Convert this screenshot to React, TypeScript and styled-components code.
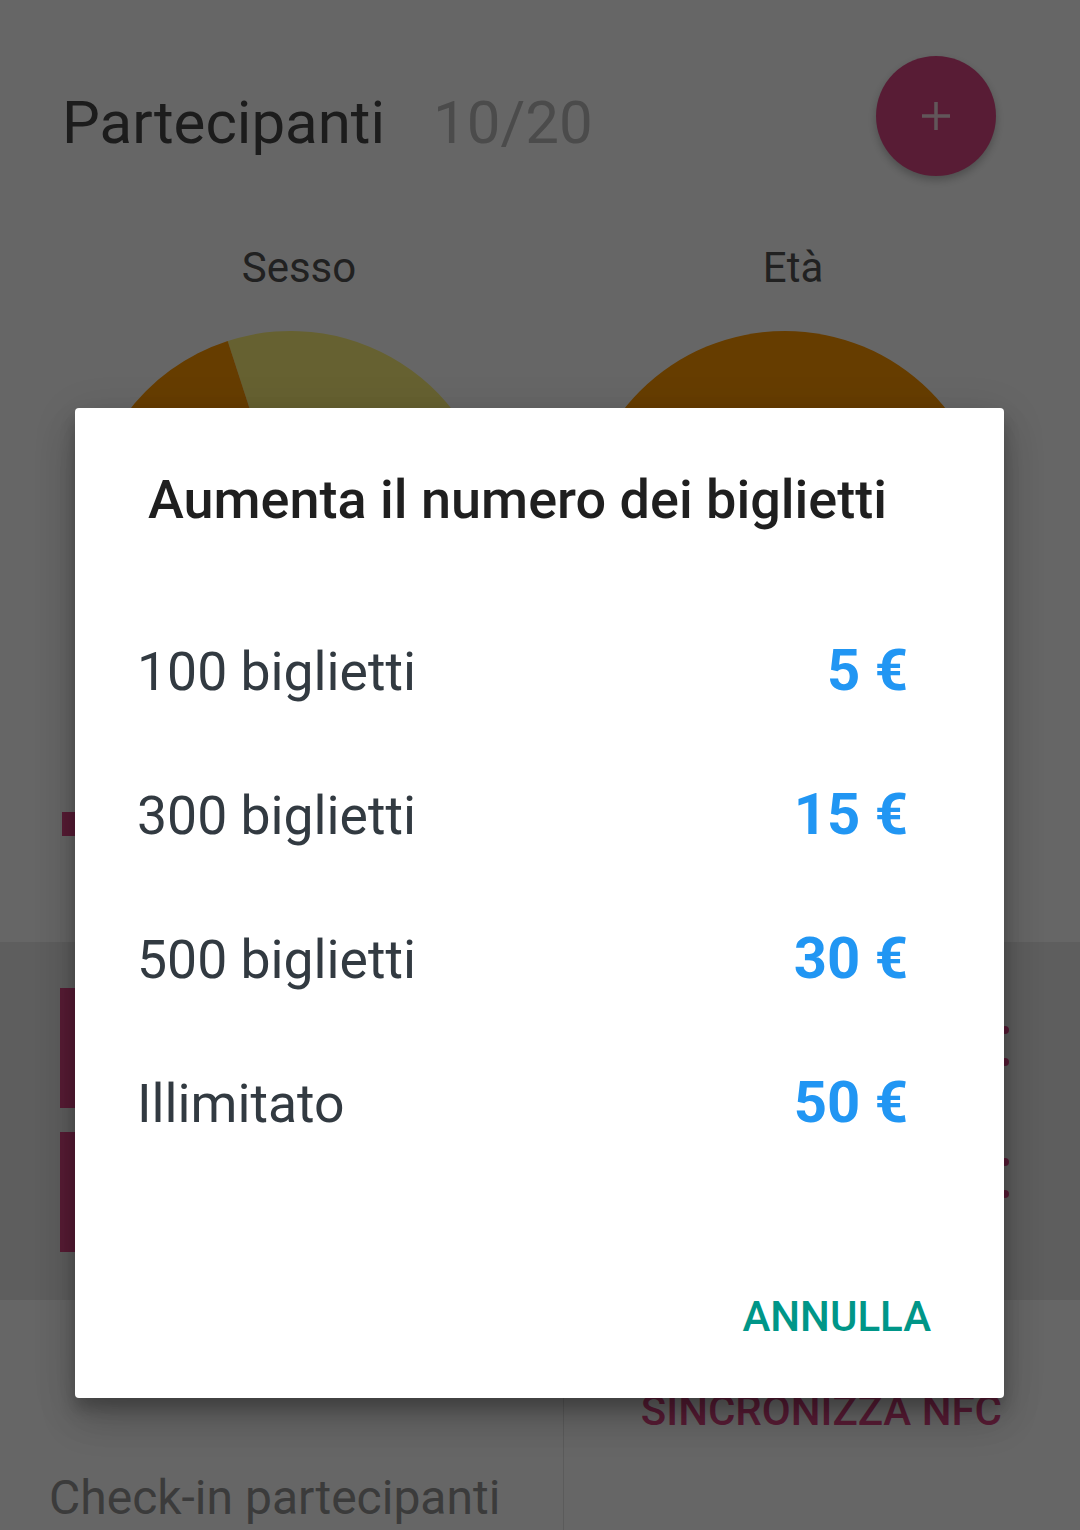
import React from 'react';
import styled, { createGlobalStyle } from 'styled-components';

const GlobalStyle = createGlobalStyle`
  html, body {
    margin: 0;
    padding: 0;
  }
  body {
    font-family: Roboto, 'Liberation Sans', sans-serif;
    background: #fff;
  }
  * {
    box-sizing: border-box;
  }
`;

const CRIMSON = '#dc4886';

const options = [
  { label: '100 biglietti', price: '5 €' },
  { label: '300 biglietti', price: '15 €' },
  { label: '500 biglietti', price: '30 €' },
  { label: 'Illimitato', price: '50 €' },
];

const App = () => {
  return (
    <Page>
      <GlobalStyle />

      <Header>
        <Title>Partecipanti</Title>
        <Count>10/20</Count>
        <Fab aria-label="aggiungi">
          <svg width="36" height="36" viewBox="0 0 36 36">
            <path d="M18 4v28M4 18h28" stroke="#f2d6e0" strokeWidth="3.5" />
          </svg>
        </Fab>
      </Header>

      <Stats>
        <StatColumn>
          <StatLabel>Sesso</StatLabel>
          <Pie width="410" height="410" viewBox="0 0 410 410">
            <path d="M205 205 L141.7 10 A205 205 0 1 1 141.7 400 Z" fill="#fff37a" />
            <path d="M205 205 L141.7 400 A205 205 0 0 1 141.7 10 Z" fill="#ff9800" />
          </Pie>
        </StatColumn>
        <StatColumn>
          <StatLabel>Età</StatLabel>
          <Pie width="410" height="410" viewBox="0 0 410 410">
            <circle cx="205" cy="205" r="205" fill="#ff9800" />
          </Pie>
        </StatColumn>
      </Stats>

      <Legend>
        <LegendSwatch />
      </Legend>

      <Band>
        <Card>
          <CardBar />
          <Dots $offset={42}>
            <Dot />
            <Dot />
          </Dots>
        </Card>
        <Card>
          <CardBar />
          <Dots $offset={30}>
            <Dot />
            <Dot />
          </Dots>
        </Card>
      </Band>

      <Bottom>
        <BottomCell>
          <CheckIn>Check-in partecipanti</CheckIn>
        </BottomCell>
        <BottomCell $divider>
          <SyncButton>SINCRONIZZA NFC</SyncButton>
        </BottomCell>
      </Bottom>

      <Scrim>
        <Dialog role="dialog">
          <DialogTitle>Aumenta il numero dei biglietti</DialogTitle>
          <OptionList>
            {options.map((o) => (
              <OptionRow key={o.label}>
                <OptionLabel>{o.label}</OptionLabel>
                <OptionPrice>{o.price}</OptionPrice>
              </OptionRow>
            ))}
          </OptionList>
          <DialogActions>
            <TextButton>ANNULLA</TextButton>
          </DialogActions>
        </Dialog>
      </Scrim>
    </Page>
  );
};

export default App;

const Page = styled.div`
  position: relative;
  width: 1080px;
  height: 1530px;
  overflow: hidden;
  background: #fff;
`;

const Header = styled.header`
  display: flex;
  align-items: flex-start;
  height: 176px;
  padding: 56px 84px 0 62px;
`;

const Title = styled.h1`
  margin: 32px 0 0;
  font-size: 60px;
  line-height: 70px;
  font-weight: 400;
  color: #474747;
`;

const Count = styled.span`
  margin: 32px 0 0 48px;
  font-size: 60px;
  line-height: 70px;
  color: #bcbcbc;
`;

const Fab = styled.button`
  margin-left: auto;
  width: 120px;
  height: 120px;
  border: none;
  border-radius: 50%;
  background: ${CRIMSON};
  display: flex;
  align-items: center;
  justify-content: center;
  box-shadow: 0 4px 8px rgba(0, 0, 0, 0.25);
`;

const Stats = styled.section`
  display: grid;
  grid-template-columns: 1fr 1fr;
  padding: 67px 44px 0 48px;
`;

const StatColumn = styled.div`
  display: flex;
  flex-direction: column;
  align-items: center;
  gap: 38px;
`;

const StatLabel = styled.div`
  padding-left: 8px;
  font-size: 42px;
  line-height: 50px;
  color: #545454;
`;

const Pie = styled.svg`
  margin-right: 8px;
`;

const Legend = styled.div`
  display: flex;
  align-items: center;
  margin-top: 71px;
  padding-left: 62px;
  height: 24px;
`;

const LegendSwatch = styled.span`
  width: 24px;
  height: 24px;
  background: ${CRIMSON};
`;

const Band = styled.section`
  display: flex;
  flex-direction: column;
  gap: 24px;
  margin-top: 106px;
  height: 358px;
  padding: 46px 71px 0 60px;
  background: #ebebeb;
`;

const Card = styled.div`
  display: flex;
  justify-content: space-between;
  height: 120px;
`;

const CardBar = styled.div`
  width: 320px;
  background: ${CRIMSON};
`;

const Dots = styled.div<{ $offset: number }>`
  display: flex;
  flex-direction: column;
  gap: 24px;
  padding-top: ${(p) => p.$offset - 4}px;
`;

const Dot = styled.span`
  width: 8px;
  height: 8px;
  border-radius: 50%;
  background: ${CRIMSON};
`;

const Bottom = styled.section`
  display: grid;
  grid-template-columns: 563px 1fr;
  height: 230px;
`;

const BottomCell = styled.div<{ $divider?: boolean }>`
  display: flex;
  flex-direction: column;
  border-left: ${(p) => (p.$divider ? '1px solid #e3e3e3' : 'none')};
`;

const CheckIn = styled.div`
  margin-top: 170px;
  padding-left: 49px;
  font-size: 48px;
  line-height: 56px;
  color: #949494;
  white-space: nowrap;
`;

const SyncButton = styled.div`
  margin-top: 86px;
  padding-right: 78px;
  text-align: right;
  font-size: 42px;
  line-height: 50px;
  font-weight: 500;
  color: ${CRIMSON};
`;

const Scrim = styled.div`
  position: absolute;
  inset: 0;
  padding: 408px 0 0 75px;
  background: rgba(0, 0, 0, 0.6);
`;

const Dialog = styled.div`
  width: 929px;
  height: 990px;
  padding-top: 62px;
  border-radius: 4px;
  background: #fff;
  box-shadow: 0 24px 38px rgba(0, 0, 0, 0.14), 0 9px 46px rgba(0, 0, 0, 0.12),
    0 11px 15px rgba(0, 0, 0, 0.2);
`;

const DialogTitle = styled.h2`
  margin: 0;
  padding-left: 73px;
  font-size: 54px;
  line-height: 60px;
  font-weight: 500;
  color: #1f1f1f;
`;

const OptionList = styled.ul`
  list-style: none;
  margin: 68px 0 0;
  padding: 0;
`;

const OptionRow = styled.li`
  display: flex;
  align-items: baseline;
  justify-content: space-between;
  height: 144px;
  padding: 0 96px 0 62px;
`;

const OptionLabel = styled.span`
  font-size: 53.5px;
  line-height: 144px;
  color: #323a41;
`;

const OptionPrice = styled.span`
  font-size: 58px;
  line-height: 144px;
  font-weight: 700;
  color: #2196f3;
`;

const DialogActions = styled.div`
  display: flex;
  justify-content: flex-end;
  margin-top: 118px;
  padding-right: 73px;
`;

const TextButton = styled.button`
  padding: 0;
  border: none;
  background: none;
  font-family: inherit;
  font-size: 42px;
  line-height: 50px;
  font-weight: 500;
  color: #009688;
`;
